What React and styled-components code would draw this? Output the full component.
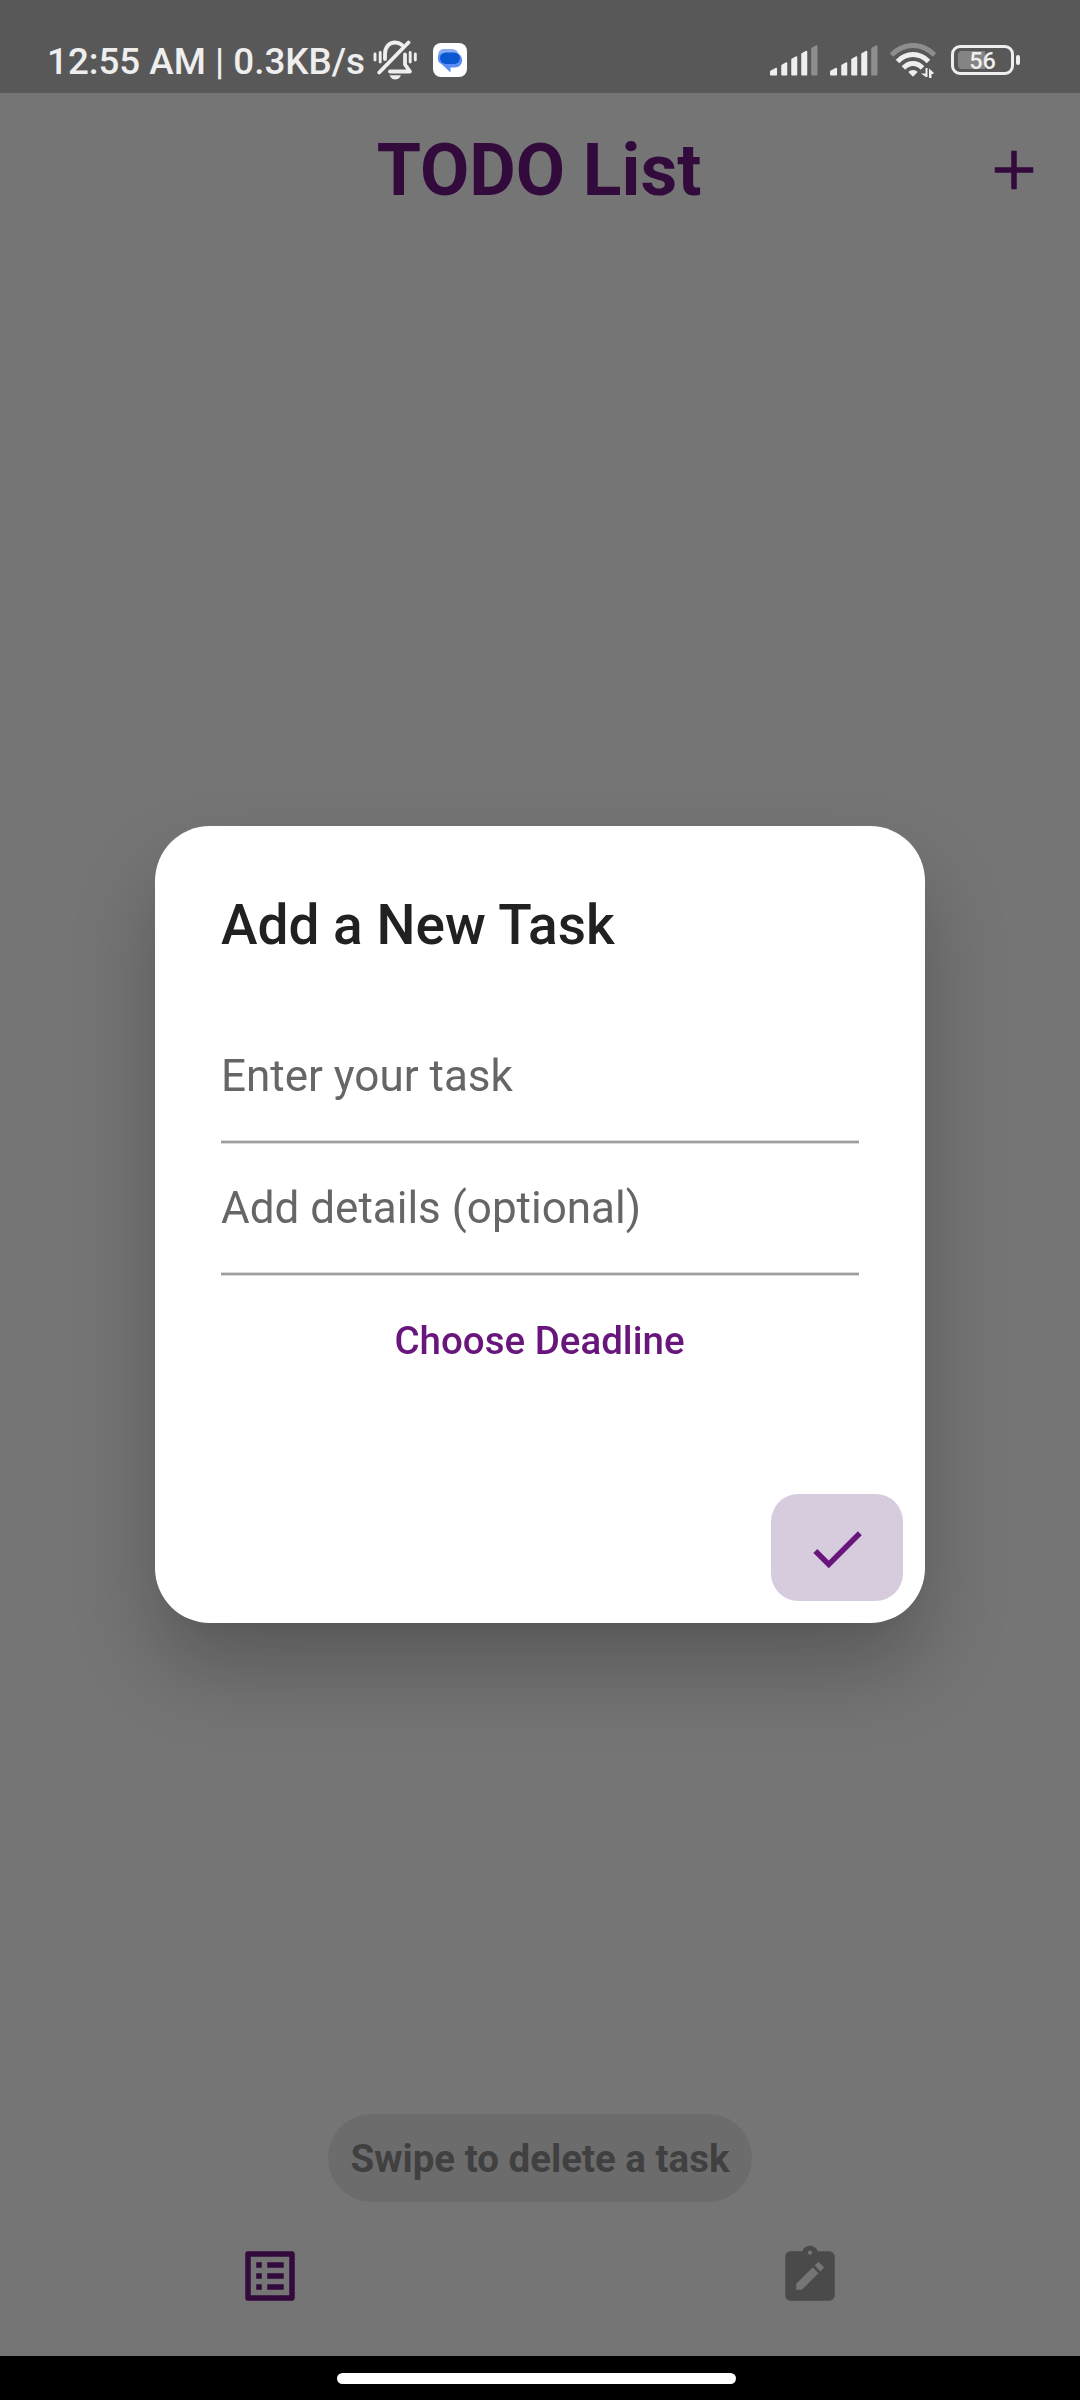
import React from "react";
import styled, { createGlobalStyle } from "styled-components";

const Global = createGlobalStyle`
  *, *::before, *::after { box-sizing: border-box; }
  html, body { margin: 0; padding: 0; background: #757575; }
  body, button, input { font-family: Roboto, "Liberation Sans", sans-serif; }
  button { border: 0; padding: 0; margin: 0; background: none; display: flex; align-items: center; justify-content: center; }
  svg { display: block; flex: none; }
`;

const Phone = styled.div`
  width: 1080px;
  height: 2400px;
  display: flex;
  flex-direction: column;
  background: #757575;
  overflow: hidden;
`;

const StatusBar = styled.header`
  height: 93px;
  flex: none;
  display: flex;
  justify-content: space-between;
  align-items: flex-start;
  padding: 35px 60px 0 47px;
  background: #585858;
  color: #eeeeee;
`;

const StatusGroup = styled.div`
  display: flex;
  align-items: center;
  height: 50px;
  gap: ${(p) => p.$gap || 0}px;
`;

const Clock = styled.span`
  width: 314px;
  padding-top: 4px;
  font-size: 36.75px;
  font-weight: 500;
  line-height: 50px;
  white-space: nowrap;
`;

const BellSlot = styled.div`
  padding-left: 12px;
`;

const LogoSlot = styled.div`
  padding-left: 16px;
`;

const AppBar = styled.div`
  height: 154px;
  flex: none;
  display: grid;
  grid-template-columns: 132px 1fr 132px;
  align-items: center;
`;

const AppTitle = styled.h1`
  grid-column: 2;
  margin: 0;
  padding: 2px 2px 0 0;
  text-align: center;
  font-size: 71.5px;
  font-weight: 700;
  line-height: 84px;
  color: #320a3c;
`;

const AddButton = styled.button`
  height: 132px;
  color: #320a3c;
`;

const Content = styled.main`
  flex: 1;
  display: flex;
  flex-direction: column;
  justify-content: flex-end;
  align-items: center;
`;

const Hint = styled.div`
  width: 424px;
  height: 88px;
  padding-top: 1px;
  border-radius: 44px;
  background: #6c6c6c;
  color: #404040;
  font-size: 38.5px;
  font-weight: 700;
  line-height: 88px;
  text-align: center;
  white-space: nowrap;
`;

const Tabs = styled.nav`
  height: 154px;
  padding-bottom: 6px;
  flex: none;
  display: grid;
  grid-template-columns: 1fr 1fr;
`;

const Tab = styled.button`
  color: ${(p) => (p.$active ? "#320a3c" : "#4a4a4a")};
`;

const GestureBar = styled.footer`
  height: 44px;
  flex: none;
  display: flex;
  padding: 17px 0 0 337px;
  background: #000;
`;

const Handle = styled.div`
  width: 399px;
  height: 11px;
  border-radius: 6px;
  background: #fff;
`;

const Overlay = styled.div`
  position: fixed;
  top: 93px;
  left: 0;
  width: 1080px;
  height: 2263px;
  display: flex;
  align-items: center;
  justify-content: center;
`;

const Dialog = styled.section`
  width: 770px;
  height: 797px;
  padding: 66px 22px 22px 66px;
  border-radius: 55px;
  background: #fff;
  display: flex;
  flex-direction: column;
  box-shadow:
    0 46px 84px rgba(0, 0, 0, 0.24),
    0 14px 24px -12px rgba(0, 0, 0, 0.06);
`;

const DialogTitle = styled.h2`
  margin: 0;
  height: 66px;
  font-size: 55px;
  font-weight: 500;
  line-height: 66px;
  color: #212121;
`;

const Fields = styled.div`
  width: 638px;
  padding-top: 54px;
  display: flex;
  flex-direction: column;
`;

const Field = styled.label`
  height: 132px;
  padding-top: 31px;
  background: linear-gradient(#dadada 0 1px, #9e9e9e 1px 3px, #dadada 3px 4px) bottom / 100% 4px no-repeat;
  font-size: 44px;
  line-height: 66px;
  color: #666666;
`;

const TextButton = styled.button`
  width: 638px;
  height: 128px;
  padding-right: 1px;
  font-size: 38.5px;
  font-weight: 500;
  color: #69167c;
`;

const Actions = styled.div`
  margin-top: auto;
  display: flex;
  justify-content: flex-end;
`;

const ConfirmButton = styled.button`
  width: 132px;
  height: 107px;
  padding-top: 2px;
  border-radius: 27.5px;
  background: #d7cbde;
  color: #69167c;
`;

const MutedBell = () => (
  <svg width="44" height="40" viewBox="0 0 44 40" fill="none" stroke="currentColor" strokeLinecap="round" strokeLinejoin="round">
    <path d="M12 19V14C12 7 16.200 2.500 22 2.500C24.500 2.500 27 3.300 29 5" strokeWidth="3.800" />
    <path d="M32 14.500V24.500L37 31.500H17" strokeWidth="3.800" />
    <path d="M6.200 32.500L35.500 2.500" strokeWidth="3.800" />
    <path d="M2 14V20M7.200 12.500V22M37.200 12.500V22M42.300 14V20" strokeWidth="2.900" />
    <path d="M16.500 35.200H28C26.500 38.500 24.500 39.500 22.200 39.500S18 38.500 16.500 35.200Z" fill="currentColor" stroke="none" />
  </svg>
);

const MessagesLogo = () => (
  <svg width="34" height="34" viewBox="0 0 34 34">
    <rect width="34" height="34" rx="8" fill="#fff" />
    <path d="M12 6h7a7 7 0 0 1 7 6v6H10a7 7 0 0 1-5-6a6 6 0 0 1 7-6Z" fill="#86aaf5" />
    <path d="M14 10h8a7 7 0 0 1 0 14.500H17.500V29.500L8.500 21A7 6 0 0 1 14 10Z" fill="#5c8ff5" />
    <rect x="7" y="9.500" width="20" height="11.500" rx="5.750" fill="#0b57d0" />
  </svg>
);

const Signal = () => (
  <svg width="48" height="31" viewBox="0 0 48 31" fill="currentColor" stroke="currentColor" strokeWidth="1.500" strokeLinejoin="round">
    <path d="M.8 26.500L6.300 23.500V29.700H.8Z" />
    <path d="M12 20.500L16.500 18V29.700H12Z" />
    <path d="M22 14.500L26.500 12V29.700H22Z" />
    <path d="M32 9L36.500 6.500V29.700H32Z" />
    <path d="M42 3.500L46.700 1V29.700H42Z" opacity=".36" />
  </svg>
);

const Wifi = () => (
  <svg width="46" height="35" viewBox="0 0 46 35" fill="none" stroke="currentColor">
    <path d="M1.500 12C14-.8 32-.8 44.500 12" strokeWidth="5" opacity=".36" />
    <path d="M7.500 18.500C16.500 9.300 29.500 9.300 38.500 18.500" strokeWidth="5" />
    <path d="M13.500 25C19 19 27 19 32.500 25" strokeWidth="5" />
    <path d="M18.300 29C20.500 26.300 25.500 26.300 27.700 29L23 33.800Z" fill="currentColor" stroke="none" />
    <path d="M31 30.500H35.500V25H37.500V34H35.800ZM39 25.500L43.500 29.500V31H41.500V35H39Z" fill="currentColor" stroke="none" />
  </svg>
);

const Battery = styled.div`
  display: flex;
  align-items: center;
  gap: 2px;
  padding-left: 3px;
`;

const BatteryBody = styled.div`
  width: 63px;
  height: 30px;
  border: 3px solid #eeeeee;
  border-radius: 9px;
  padding: 3px 4px;
  display: grid;
`;

const BatteryCharge = styled.div`
  grid-area: 1 / 1;
  width: 27px;
  height: 18px;
  border-radius: 4px 0 0 4px;
  background: #848484;
`;

const BatteryLevel = styled.span`
  grid-area: 1 / 1;
  z-index: 1;
  text-align: center;
  font-size: 23.500px;
  font-weight: 500;
  line-height: 21px;
`;

const BatteryTip = styled.div`
  width: 4px;
  height: 10px;
  border-radius: 2px;
  background: #eeeeee;
`;

const Icon = ({ d, size = 66 }) => (
  <svg width={size} height={size} viewBox="0 0 24 24" fill="currentColor">
    <path fillRule="evenodd" d={d} />
  </svg>
);

const icons = {
  add: "M19 13h-6v6h-2v-6H5v-2h6V5h2v6h6v2z",
  check: "M9 16.170L4.830 12l-1.420 1.410L9 19 21 7l-1.410-1.410z",
  list: "M19 5v14H5V5h14m1.100-2H3.900c-.5 0-.9.4-.9.9v16.200c0 .4.4.9.9.9h16.200c.4 0 .9-.5.9-.9V3.900c0-.5-.5-.9-.9-.9zM11 7h6v2h-6V7zm0 4h6v2h-6v-2zm0 4h6v2h-6zM7 7h2v2H7zm0 4h2v2H7zm0 4h2v2H7z",
  clipboard:
    "M19 3h-4.180C14.400 1.840 13.300 1 12 1s-2.400.84-2.820 2H5c-1.100 0-2 .9-2 2v14c0 1.100.9 2 2 2h14c1.100 0 2-.9 2-2V5c0-1.100-.9-2-2-2zM12 2.750a.75.75 0 1 1 0 1.500.75.75 0 0 1 0-1.500zM9.100 17H7v-2.140l5.960-5.960 2.120 2.120L9.100 17zm7.750-7.730l-1.060 1.060-2.120-2.120 1.060-1.060c.2-.2.510-.2.710 0l1.410 1.410c.2.2.2.510 0 .71z",
};

export default function App() {
  return (
    <Phone>
      <Global />
      <StatusBar>
        <StatusGroup>
          <Clock>12:55 AM | 0.3KB/s</Clock>
          <BellSlot>
            <MutedBell />
          </BellSlot>
          <LogoSlot>
            <MessagesLogo />
          </LogoSlot>
        </StatusGroup>
        <StatusGroup $gap={12}>
          <Signal />
          <Signal />
          <Wifi />
          <Battery>
            <BatteryBody>
              <BatteryCharge />
              <BatteryLevel>56</BatteryLevel>
            </BatteryBody>
            <BatteryTip />
          </Battery>
        </StatusGroup>
      </StatusBar>
      <AppBar>
        <AppTitle>TODO List</AppTitle>
        <AddButton aria-label="Add task">
          <Icon d={icons.add} />
        </AddButton>
      </AppBar>
      <Content>
        <Hint>Swipe to delete a task</Hint>
      </Content>
      <Tabs>
        <Tab $active aria-label="Tasks">
          <Icon d={icons.list} />
        </Tab>
        <Tab aria-label="Completed">
          <Icon d={icons.clipboard} />
        </Tab>
      </Tabs>
      <GestureBar>
        <Handle />
      </GestureBar>
      <Overlay>
        <Dialog>
          <DialogTitle>Add a New Task</DialogTitle>
          <Fields>
            <Field>Enter your task</Field>
            <Field>Add details (optional)</Field>
          </Fields>
          <TextButton>Choose Deadline</TextButton>
          <Actions>
            <ConfirmButton aria-label="Confirm">
              <Icon d={icons.check} />
            </ConfirmButton>
          </Actions>
        </Dialog>
      </Overlay>
    </Phone>
  );
}
